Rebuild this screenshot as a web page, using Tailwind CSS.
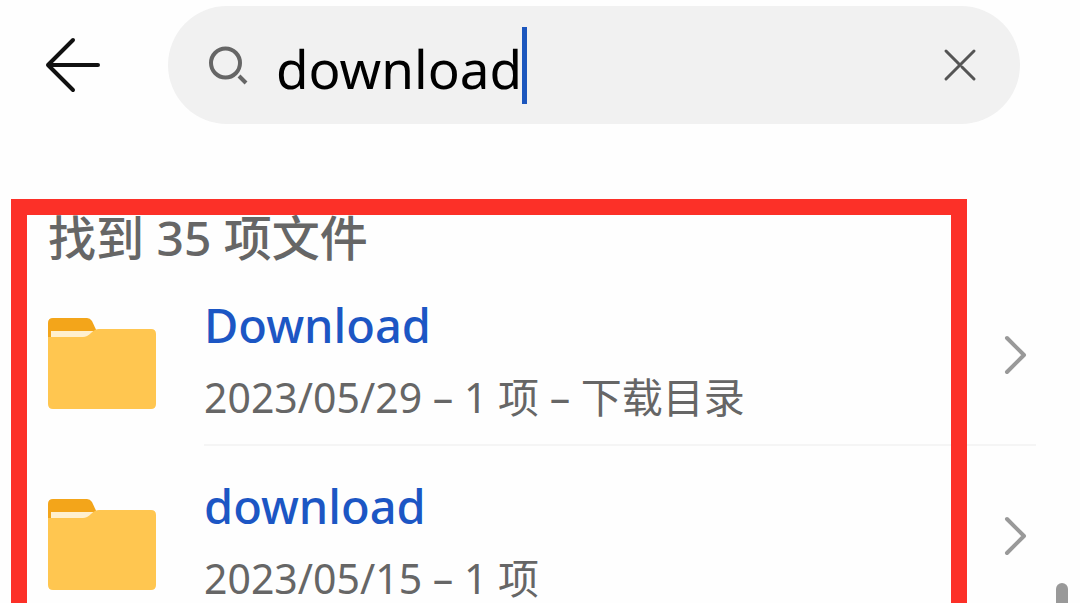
<!DOCTYPE html>
<html lang="zh-CN">
<head>
<meta charset="utf-8">
<meta name="viewport" content="width=device-width, initial-scale=1">
<title>download</title>
<script src="https://cdn.jsdelivr.net/npm/@tailwindcss/browser@4"></script>
</head>
<body class="relative h-screen overflow-hidden bg-[#fefefe] font-['Noto_Sans','Noto_Sans_CJK_SC',sans-serif]">
  <svg class="hidden" aria-hidden="true">
    <symbol id="folder" viewBox="0 0 108 106">
      <path d="M0 48V20q0-5 5-5h34q3 0 5 3l6 13z" fill="#f3a51a"/>
      <path d="M3 28h42v10H3z" fill="#fff0cf"/>
      <path d="M0 34h35q4 0 8-4 4-4 8-4h52q5 0 5 5v70q0 5-5 5H5q-5 0-5-5z" fill="#ffc650"/>
    </symbol>
    <symbol id="chevron" viewBox="0 0 24 42">
      <path d="M3 4l17 17L3 38" fill="none" stroke="#999" stroke-width="4" stroke-linecap="round" stroke-linejoin="round"/>
    </symbol>
  </svg>

  <header class="flex items-center pt-[6px] pr-[60px] pl-11">
    <button type="button" aria-label="返回" class="mr-[68px] shrink-0">
      <svg class="block h-14 w-14" viewBox="0 0 56 56" fill="none" stroke="#111" stroke-width="4" stroke-linecap="round" stroke-linejoin="round"><path d="M29 3L4 28l25 25M4 28h50"/></svg>
    </button>
    <search class="flex h-[118px] min-w-0 flex-1 items-center rounded-full bg-[#f1f1f1] pr-10 pl-10">
      <svg class="mr-7 h-10 w-10 shrink-0" viewBox="0 0 40 40" fill="none" stroke="#666" stroke-width="4" stroke-linecap="round" aria-hidden="true"><circle cx="17.500" cy="18" r="14.500"/><path d="M31 31l7 7" stroke-linecap="butt"/></svg>
      <input type="text" aria-label="搜索" value="download" class="field-sizing-content min-w-0 bg-transparent pt-2 text-[53px] leading-[72px] text-black outline-none">
      <span class="h-[77px] w-[5px] shrink-0 bg-[#1c56bd]"></span>
      <button type="button" aria-label="清除" class="ml-auto shrink-0">
        <svg class="block h-10 w-10" viewBox="0 0 40 40" fill="none" stroke="#555" stroke-width="3" stroke-linecap="round"><path d="M34 6L6 34M6 6l13 13M22 22l12 12"/></svg>
      </button>
    </search>
  </header>

  <main class="pt-[91px]">
    <h1 class="pb-1 pl-12 text-[48px] leading-[46px] font-medium text-[#666]">找到 35 项文件</h1>
    <ul>
      <li>
        <a href="#" class="flex items-center pr-11 pl-12">
          <svg class="mr-12 h-[106px] w-[108px] shrink-0" aria-hidden="true"><use href="#folder"/></svg>
          <span class="flex h-[181px] min-w-0 flex-1 items-center border-b-2 border-[#f5f5f5]">
            <span class="flex flex-1 flex-col gap-3 pt-2 whitespace-nowrap">
              <span class="text-[47px] leading-[64px] font-medium text-[#1c56c4]">Download</span>
              <span class="text-[41px] leading-[56px] text-[#666]">2023/05/29 – 1 项 – 下载目录</span>
            </span>
            <svg class="mr-2 h-[42px] w-6 shrink-0" aria-hidden="true"><use href="#chevron"/></svg>
          </span>
        </a>
      </li>
      <li>
        <a href="#" class="flex items-center pr-11 pl-12">
          <svg class="mr-12 h-[106px] w-[108px] shrink-0" aria-hidden="true"><use href="#folder"/></svg>
          <span class="flex h-[181px] min-w-0 flex-1 items-center border-b-2 border-[#f5f5f5]">
            <span class="flex flex-1 flex-col gap-3 pt-2 whitespace-nowrap">
              <span class="text-[47px] leading-[64px] font-medium text-[#1c56c4]">download</span>
              <span class="text-[41px] leading-[56px] text-[#666]">2023/05/15 – 1 项</span>
            </span>
            <svg class="mr-2 h-[42px] w-6 shrink-0" aria-hidden="true"><use href="#chevron"/></svg>
          </span>
        </a>
      </li>
    </ul>
  </main>

  <!-- highlight frame over the result list -->
  <div class="pointer-events-none absolute top-[199px] right-[113px] -bottom-5 left-[11px] border-16 border-[#fc3028]"></div>
  <!-- scrollbar thumb -->
  <div class="absolute top-[583px] right-3 h-40 w-3 rounded-full bg-[#999]"></div>
</body>
</html>
